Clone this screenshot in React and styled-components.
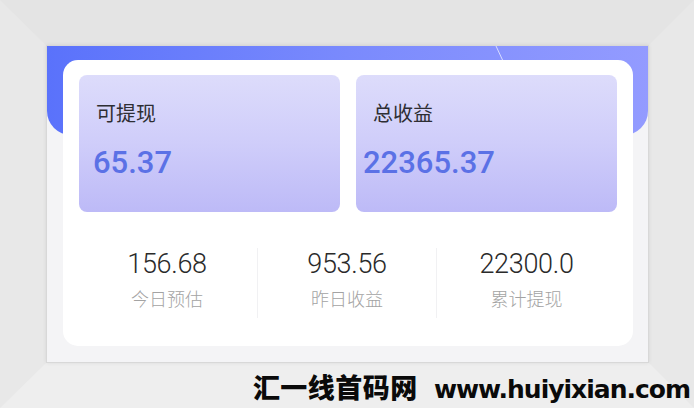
import React from "react";
import styled, { createGlobalStyle } from "styled-components";

const GlobalStyle = createGlobalStyle`
  html, body {
    margin: 0;
    padding: 0;
    background: #ffffff;
  }
  body {
    font-family: "Noto Sans CJK SC", "Noto Sans", sans-serif;
  }
`;

const Frame = styled.div`
  position: relative;
  width: 694px;
  height: 408px;
  box-sizing: border-box;
  border-style: solid;
  border-width: 46px 46px 46px 47px;
  border-top-color: #e4e4e4;
  border-left-color: #e8e8e8;
  border-right-color: #e8e8e8;
  border-bottom-color: #eeeeee;
  box-shadow: inset 0 0 0 1px #d4d4d4;
`;

const Opening = styled.div`
  position: relative;
  height: 100%;
  background: #f4f4f6;
  box-shadow: 0 0 0 1px #d8d8d8, 0 0 4px 1px rgba(0, 0, 0, 0.08);
  overflow: hidden;
`;

const Header = styled.div`
  position: relative;
  height: 89px;
  background: linear-gradient(90deg, #5a72fb 0%, #7a8afd 50%, #939bff 100%);
  border-radius: 0 0 24px 24px;
`;

const Streak = styled.svg`
  position: absolute;
  left: 448px;
  top: 0;
`;

const Card = styled.div`
  position: relative;
  margin: -75px 15px 0 16px;
  height: 286px;
  box-sizing: border-box;
  padding: 15px 16px;
  background: #ffffff;
  border-radius: 15px;
`;

const Boxes = styled.div`
  display: grid;
  grid-template-columns: 1fr 1fr;
  gap: 16px;
`;

const Box = styled.div`
  height: 137px;
  box-sizing: border-box;
  padding: 26px 0 0 17px;
  border-radius: 8px;
  background: linear-gradient(180deg, #dddcfb 0%, #cfcdfa 50%, #bdbaf7 100%);
`;

const BoxLabel = styled.div`
  font-size: 20px;
  line-height: 24px;
  color: #2e2e33;
`;

const BoxValue = styled.div`
  margin: 20px 0 0 ${(p) => p.$shift}px;
  font-family: Roboto, "Liberation Sans", sans-serif;
  font-weight: 500;
  font-size: 31px;
  line-height: 36px;
  color: #5b71e6;
`;

const Stats = styled.div`
  display: grid;
  grid-template-columns: 180px 179px 180px;
  margin: 36px 0 0 -2px;
`;

const Stat = styled.div`
  display: flex;
  flex-direction: column;
  align-items: center;
  height: 70px;
  border-left: ${(p) => (p.$first ? "none" : "1px solid #f1f1f3")};
`;

const StatValue = styled.div`
  margin-top: 1px;
  font-family: Roboto, "Liberation Sans", sans-serif;
  font-weight: 300;
  font-size: 27px;
  line-height: 30px;
  letter-spacing: -0.3px;
  color: #2a2a2a;
`;

const StatLabel = styled.div`
  margin-top: 8px;
  font-size: 18px;
  line-height: 22px;
  font-weight: 300;
  color: #a3a3a3;
`;

const Watermark = styled.div`
  position: absolute;
  right: -42px;
  bottom: -44px;
  display: flex;
  align-items: baseline;
  gap: 16px;
  color: #0a0a0a;
  white-space: nowrap;
`;

const MarkCn = styled.span`
  font-family: "Noto Sans CJK SC", sans-serif;
  font-weight: 900;
  font-size: 27px;
  letter-spacing: 0.5px;
`;

const MarkEn = styled.span`
  font-family: "DejaVu Sans", sans-serif;
  font-weight: 700;
  font-size: 25px;
  letter-spacing: -1px;
`;

const stats = [
  { value: "156.68", label: "今日预估" },
  { value: "953.56", label: "昨日收益" },
  { value: "22300.0", label: "累计提现" },
];

export default function App() {
  return (
    <>
      <GlobalStyle />
      <Frame>
        <Opening>
          <Header>
            <Streak width="12" height="16" viewBox="0 0 12 16">
              <line x1="1" y1="0" x2="8" y2="15" stroke="#d8dcff" strokeWidth="1" />
            </Streak>
          </Header>
          <Card>
            <Boxes>
              <Box>
                <BoxLabel>可提现</BoxLabel>
                <BoxValue $shift={-3}>65.37</BoxValue>
              </Box>
              <Box>
                <BoxLabel>总收益</BoxLabel>
                <BoxValue $shift={-10}>22365.37</BoxValue>
              </Box>
            </Boxes>
            <Stats>
              {stats.map((s, i) => (
                <Stat key={s.label} $first={i === 0}>
                  <StatValue>{s.value}</StatValue>
                  <StatLabel>{s.label}</StatLabel>
                </Stat>
              ))}
            </Stats>
          </Card>
        </Opening>
        <Watermark>
          <MarkCn>汇一线首码网</MarkCn>
          <MarkEn>www.huiyixian.com</MarkEn>
        </Watermark>
      </Frame>
    </>
  );
}
